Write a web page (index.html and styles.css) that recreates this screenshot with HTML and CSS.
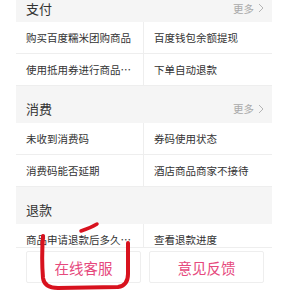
FILE: index.html
```html
<!DOCTYPE html>
<html lang="zh-CN">
<head>
<meta charset="utf-8">
<title>帮助中心</title>
<link rel="stylesheet" href="styles.css">
</head>
<body>
<div class="page">
  <section class="group first">
    <div class="group-head">
      <span class="title">支付</span>
      <span class="more">更多<svg class="chev" width="6" height="10" viewBox="0 0 6 10"><path d="M1 1 L5 5 L1 9" fill="none" stroke="#b5b5b5" stroke-width="1"/></svg></span>
    </div>
    <div class="grid">
      <div class="cell">购买百度糯米团购商品</div>
      <div class="cell">百度钱包余额提现</div>
      <div class="cell">使用抵用券进行商品购买</div>
      <div class="cell">下单自动退款</div>
    </div>
  </section>
  <section class="group">
    <div class="group-head">
      <span class="title">消费</span>
      <span class="more">更多<svg class="chev" width="6" height="10" viewBox="0 0 6 10"><path d="M1 1 L5 5 L1 9" fill="none" stroke="#b5b5b5" stroke-width="1"/></svg></span>
    </div>
    <div class="grid">
      <div class="cell">未收到消费码</div>
      <div class="cell">券码使用状态</div>
      <div class="cell">消费码能否延期</div>
      <div class="cell">酒店商品商家不接待</div>
    </div>
  </section>
  <section class="group">
    <div class="group-head">
      <span class="title">退款</span>
    </div>
    <div class="grid">
      <div class="cell">商品申请退款后多久到账</div>
      <div class="cell">查看退款进度</div>
    </div>
  </section>
</div>
<div class="bottom-bar">
  <a class="btn">在线客服</a>
  <a class="btn">意见反馈</a>
</div>
<svg class="mark" width="291" height="293" viewBox="0 0 291 293">
  <path d="M43 236 C42 250 42 266 43 278 C44 286 50 288 58 288 L118 287 C125 286 128 282 128 274 L128 243" fill="none" stroke="#d8121e" stroke-width="4" stroke-linecap="round" stroke-linejoin="round"/>
  <path d="M81 231 C87 229 92 227 97 224" fill="none" stroke="#d8121e" stroke-width="3.5" stroke-linecap="round"/>
</svg>
</body>
</html>
```
FILE: styles.css
```css
html, body {
  margin: 0;
  padding: 0;
}
body {
  background: #fff;
  font-family: "Noto Sans CJK SC", "Noto Sans", sans-serif;
  height: 293px;
  overflow: hidden;
}
.page {
  margin: -6px 19px 0 16px;
  background: #f5f5f5;
}
.group + .group {
  margin-top: 8px;
}
.group-head {
  height: 29px;
  display: flex;
  align-items: center;
  justify-content: space-between;
  padding: 0 8px 0 10px;
  font-size: 13px;
  color: #333;
}
.group.first .group-head {
  height: 28px;
}
.more {
  display: flex;
  align-items: center;
  gap: 4px;
  font-size: 10.5px;
  color: #aaa;
}
.grid {
  display: grid;
  grid-template-columns: 1fr 1fr;
  background: #fff;
}
.cell {
  box-sizing: border-box;
  height: 32px;
  line-height: 31px;
  padding: 0 10px;
  font-size: 10.5px;
  color: #333;
  border-bottom: 1px solid #eee;
  white-space: nowrap;
  overflow: hidden;
  text-overflow: ellipsis;
}
.cell:nth-child(odd) {
  border-right: 1px solid #eee;
}
.bottom-bar {
  position: fixed;
  left: 16px;
  bottom: 0;
  width: 256px;
  height: 46px;
  box-sizing: border-box;
  background: #fff;
  border-top: 1px solid #eee;
  display: flex;
  gap: 8px;
  padding: 3px 8px 10px 10px;
}
.btn {
  flex: 1;
  box-sizing: border-box;
  height: 32px;
  border: 1px solid #eee;
  border-radius: 2px;
  display: flex;
  align-items: center;
  justify-content: center;
  font-size: 14.5px;
  color: #e6497d;
}
.mark {
  position: absolute;
  left: 0;
  top: 0;
  pointer-events: none;
}
```
